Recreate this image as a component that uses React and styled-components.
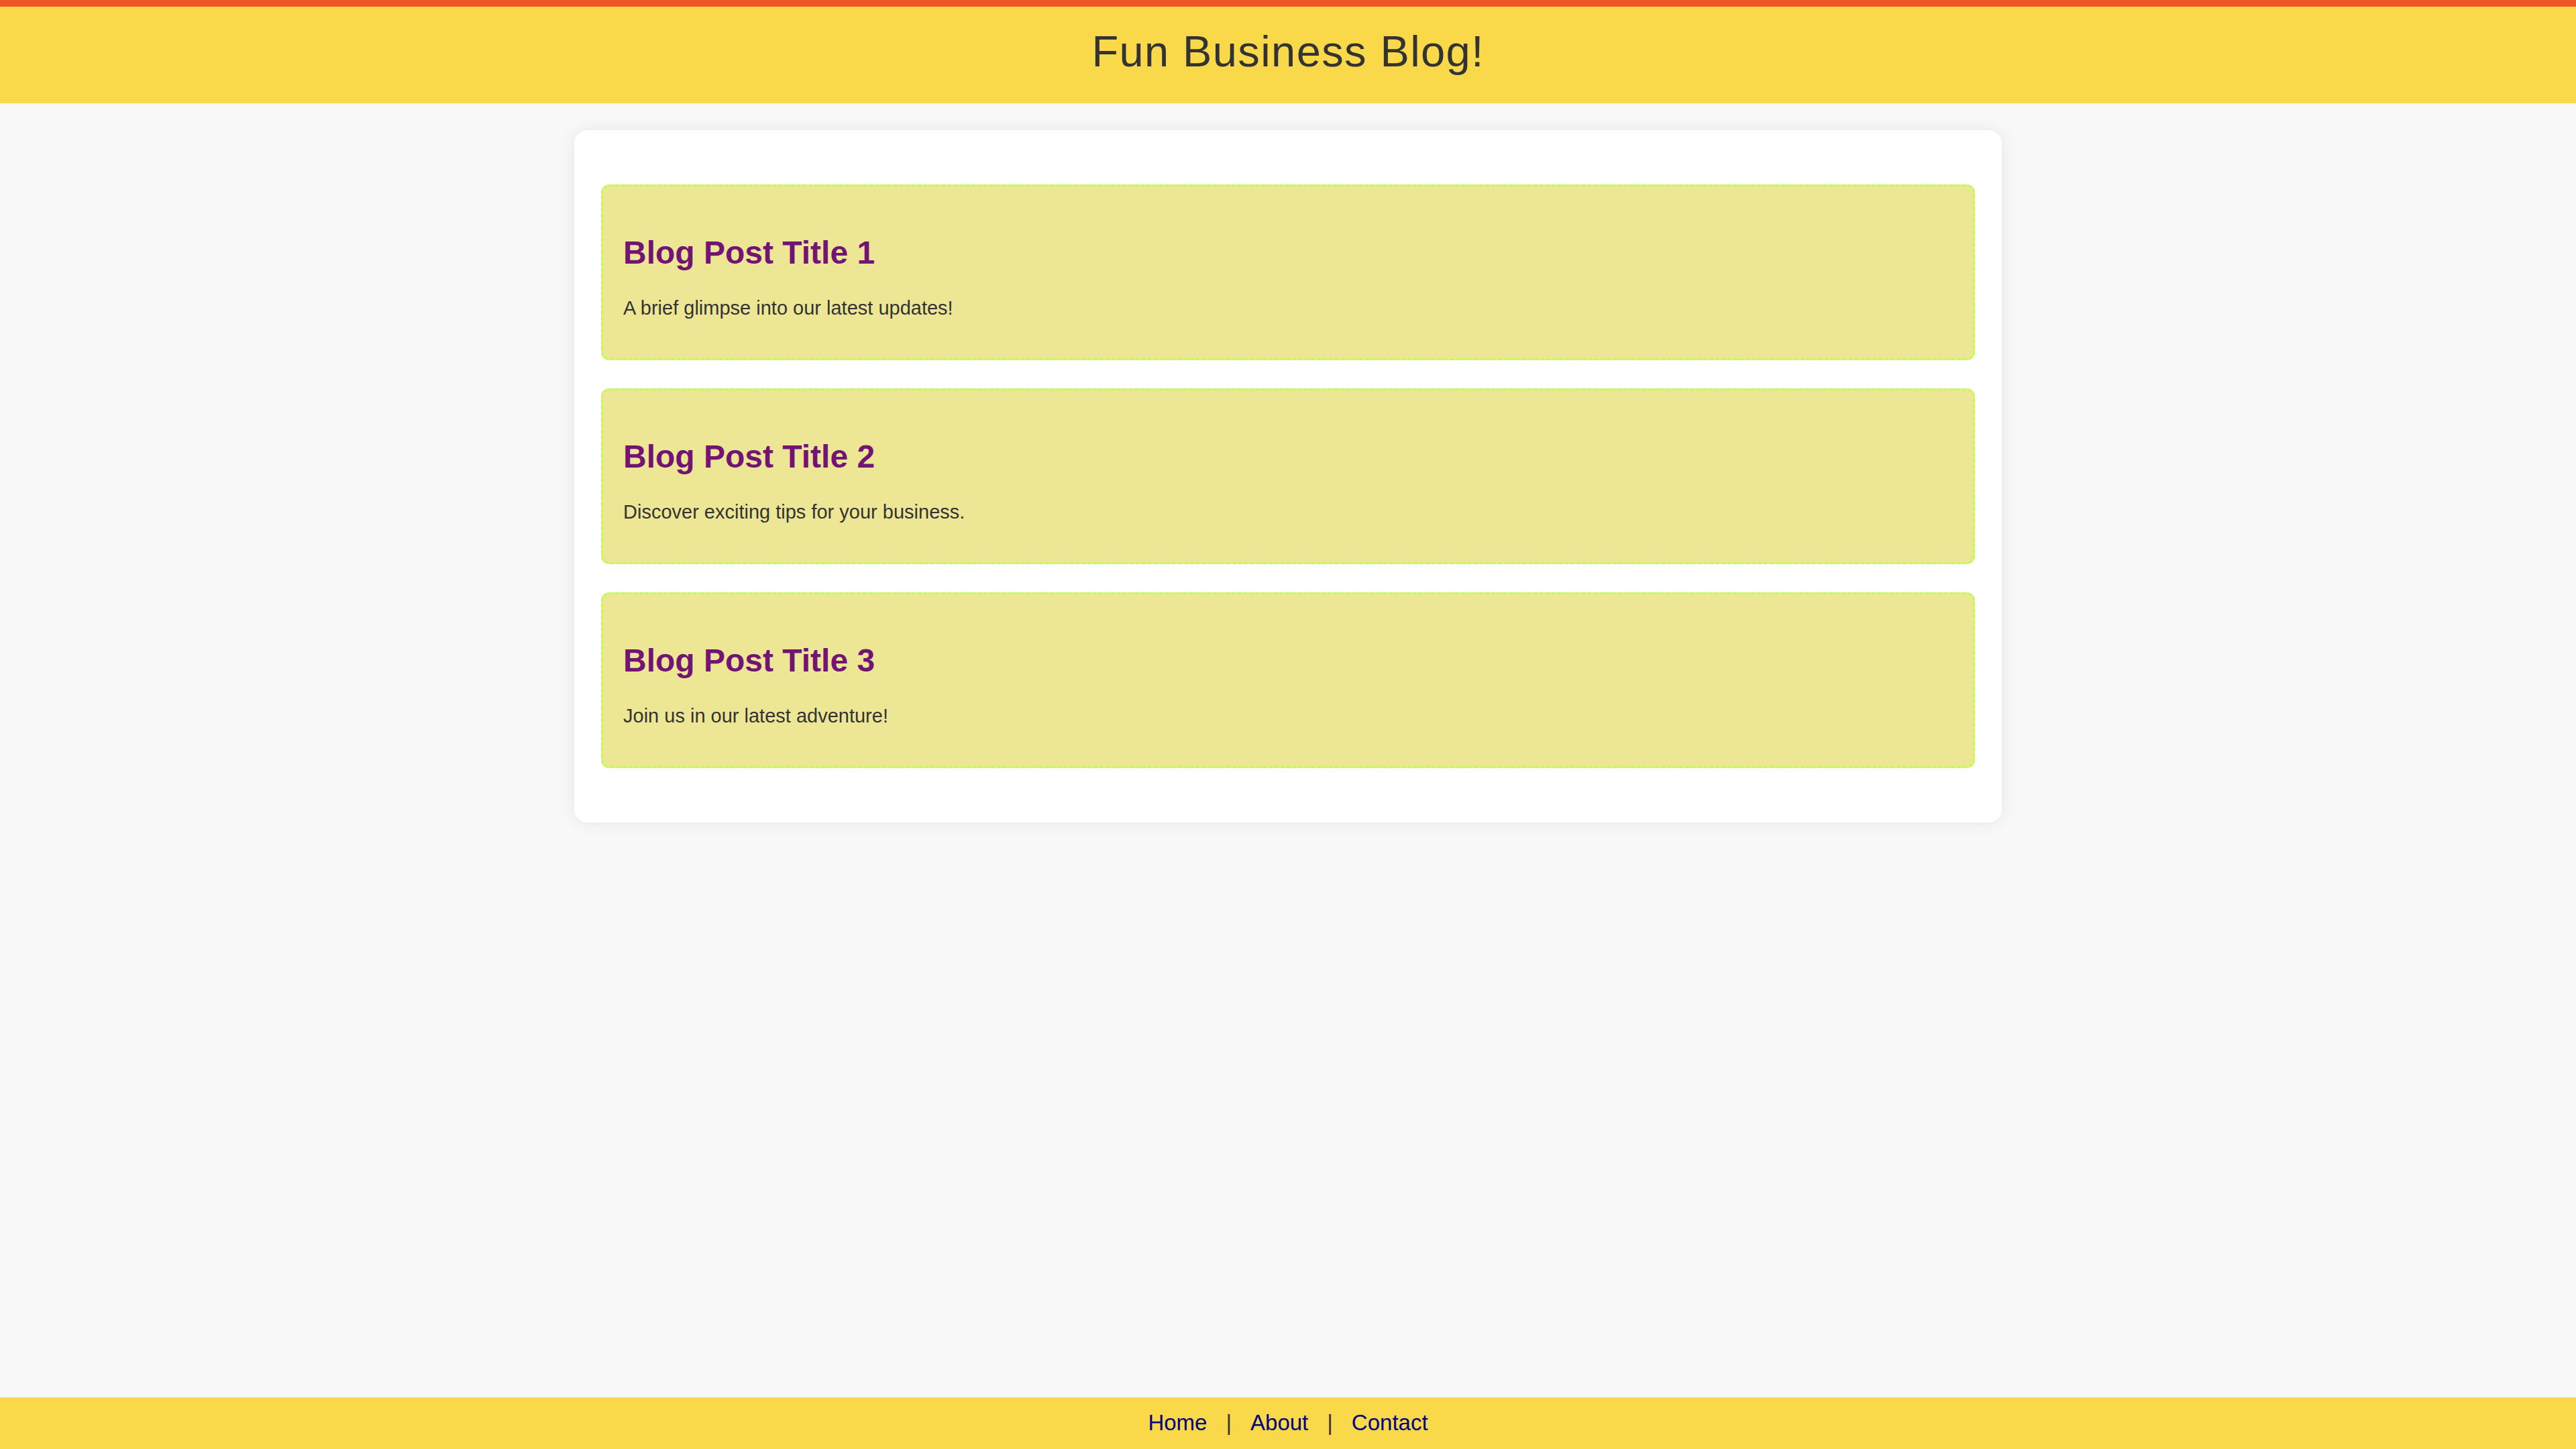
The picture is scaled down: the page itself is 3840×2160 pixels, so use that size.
import React from 'react';
import styled, { createGlobalStyle } from 'styled-components';


const GlobalStyle = createGlobalStyle`
    html, body {
        margin: 0;
        padding: 0;
    }
    body {
        background: #f8f8f8;
        font-family: "Liberation Sans", Arial, sans-serif;
        color: #333;
    }
`

const Page = styled.div`
    min-height: 100vh;
    display: flex;
    flex-direction: column;
`

const Header = styled.header`
    border-top: 10px solid #ee5527;
    background: #f9d84a;
    padding: 29px 0 40px;
    text-align: center;
`

const Title = styled.h1`
    margin: 0;
    font-size: 65px;
    font-weight: normal;
    letter-spacing: 1.4px;
    line-height: normal;
    color: #333;
`

const Main = styled.main`
    flex: 1;
`

const Container = styled.div`
    box-sizing: border-box;
    width: 2128px;
    margin: 40px auto 0;
    padding: 81px 40px;
    background: #fff;
    border-radius: 20px;
    box-shadow: 0 0 24px rgba(0, 0, 0, 0.08);
    display: flex;
    flex-direction: column;
    gap: 42px;
`

const Post = styled.article`
    background: #ede695;
    border: 3px dashed #c0ff50;
    border-radius: 12px;
    padding: 29px 30px;
`

const PostTitle = styled.h2`
    margin: 42px 0 39px;
    font-size: 48px;
    font-weight: bold;
    line-height: normal;
    color: #731475;
`

const PostText = styled.p`
    margin: 0 0 29px;
    font-size: 29px;
    line-height: normal;
    color: #333;
`

const Footer = styled.footer`
    background: #f9d84a;
    padding: 19px 0 20px;
    display: flex;
    justify-content: center;
    gap: 28px;
    font-size: 33px;
    line-height: normal;
`

const Link = styled.a`
    color: #000080;
    text-decoration: none;
`

const Sep = styled.span`
    color: #333;
`


const posts = [
    { title: "Blog Post Title 1", text: "A brief glimpse into our latest updates!" },
    { title: "Blog Post Title 2", text: "Discover exciting tips for your business." },
    { title: "Blog Post Title 3", text: "Join us in our latest adventure!" }
]

const links = ["Home", "About", "Contact"]


export default function App() {
    return (
        <Page>
            <GlobalStyle />
            <Header>
                <Title>Fun Business Blog!</Title>
            </Header>

            <Main>
                <Container>
                    {
                        posts.map((post, ix) => (
                            <Post key={ix}>
                                <PostTitle>{post.title}</PostTitle>
                                <PostText>{post.text}</PostText>
                            </Post>
                        ))
                    }
                </Container>
            </Main>

            <Footer>
                {
                    links.map((name, ix) => (
                        <React.Fragment key={name}>
                            {ix > 0 && <Sep>|</Sep>}
                            <Link href="#">{name}</Link>
                        </React.Fragment>
                    ))
                }
            </Footer>
        </Page>
    )
}
